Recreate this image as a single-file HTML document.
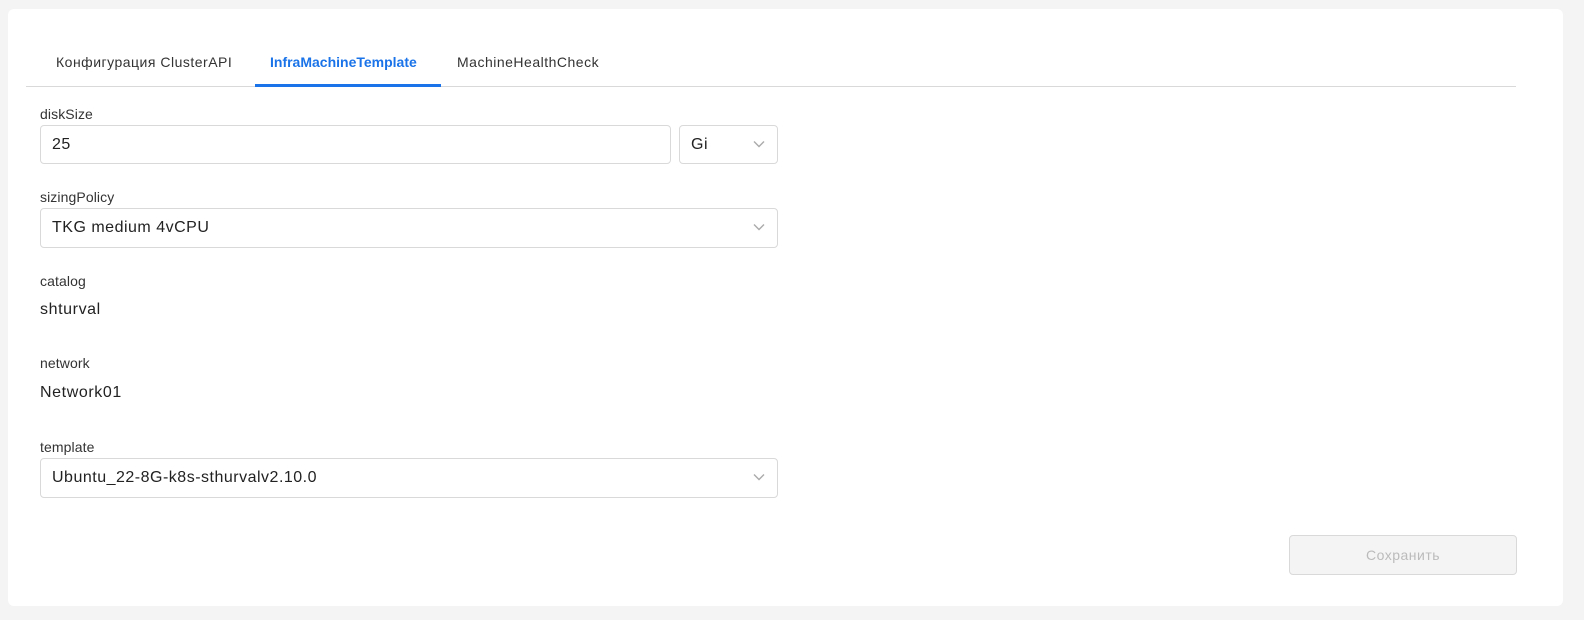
<!DOCTYPE html>
<html><head><meta charset="utf-8"><style>
body{margin:0;background:#f4f4f4;font-family:"Liberation Sans","Noto Sans CJK SC",sans-serif;color:#222;width:1584px;height:620px;position:relative;overflow:hidden}
.card{position:absolute;left:8px;top:9px;width:1555px;height:597px;background:#fff;border-radius:6px}
.a{position:absolute}
.tab{position:absolute;top:54px;font-size:14px;color:#333;letter-spacing:0.5px}
.lbl{position:absolute;left:40px;font-size:14px;color:#333;letter-spacing:0.1px}
.box{position:absolute;border:1px solid #d9d9d9;border-radius:4px;box-sizing:border-box;font-size:16px;color:#222;padding-left:11px;display:flex;align-items:center;letter-spacing:0.5px}
.chev{position:absolute;right:12px;top:50%;margin-top:-5px}
.val{position:absolute;left:40px;font-size:16px;color:#222;letter-spacing:0.6px}
</style></head><body>
<div class="card"></div>
<div class="tab" style="left:56px">Конфигурация ClusterAPI</div>
<div class="tab" style="left:270px;color:#1a73e8;font-weight:bold;letter-spacing:0">InfraMachineTemplate</div>
<div class="tab" style="left:457px">MachineHealthCheck</div>
<div class="a" style="left:26px;top:86px;width:1490px;height:1px;background:#d9d9d9"></div>
<div class="a" style="left:255px;top:84px;width:186px;height:3px;background:#1a73e8"></div>

<div class="lbl" style="top:106px">diskSize</div>
<div class="box" style="left:40px;top:125px;width:631px;height:39px">25</div>
<div class="box" style="left:679px;top:125px;width:99px;height:39px">Gi<svg class="chev" width="12" height="8" viewBox="0 0 12 8"><path d="M1 1.5L6 6.5L11 1.5" fill="none" stroke="#aaa" stroke-width="1.4"/></svg></div>

<div class="lbl" style="top:189px">sizingPolicy</div>
<div class="box" style="left:40px;top:208px;width:738px;height:40px">TKG medium 4vCPU<svg class="chev" width="12" height="8" viewBox="0 0 12 8"><path d="M1 1.5L6 6.5L11 1.5" fill="none" stroke="#aaa" stroke-width="1.4"/></svg></div>

<div class="lbl" style="top:273px">catalog</div>
<div class="val" style="top:301px">shturval</div>
<div class="lbl" style="top:355px">network</div>
<div class="val" style="top:384px">Network01</div>

<div class="lbl" style="top:439px">template</div>
<div class="box" style="left:40px;top:458px;width:738px;height:40px">Ubuntu_22-8G-k8s-sthurvalv2.10.0<svg class="chev" width="12" height="8" viewBox="0 0 12 8"><path d="M1 1.5L6 6.5L11 1.5" fill="none" stroke="#aaa" stroke-width="1.4"/></svg></div>

<div class="box" style="left:1289px;top:535px;width:228px;height:40px;background:#f4f4f4;justify-content:center;padding:0;color:#bbb;font-size:14px">Сохранить</div>
</body></html>
